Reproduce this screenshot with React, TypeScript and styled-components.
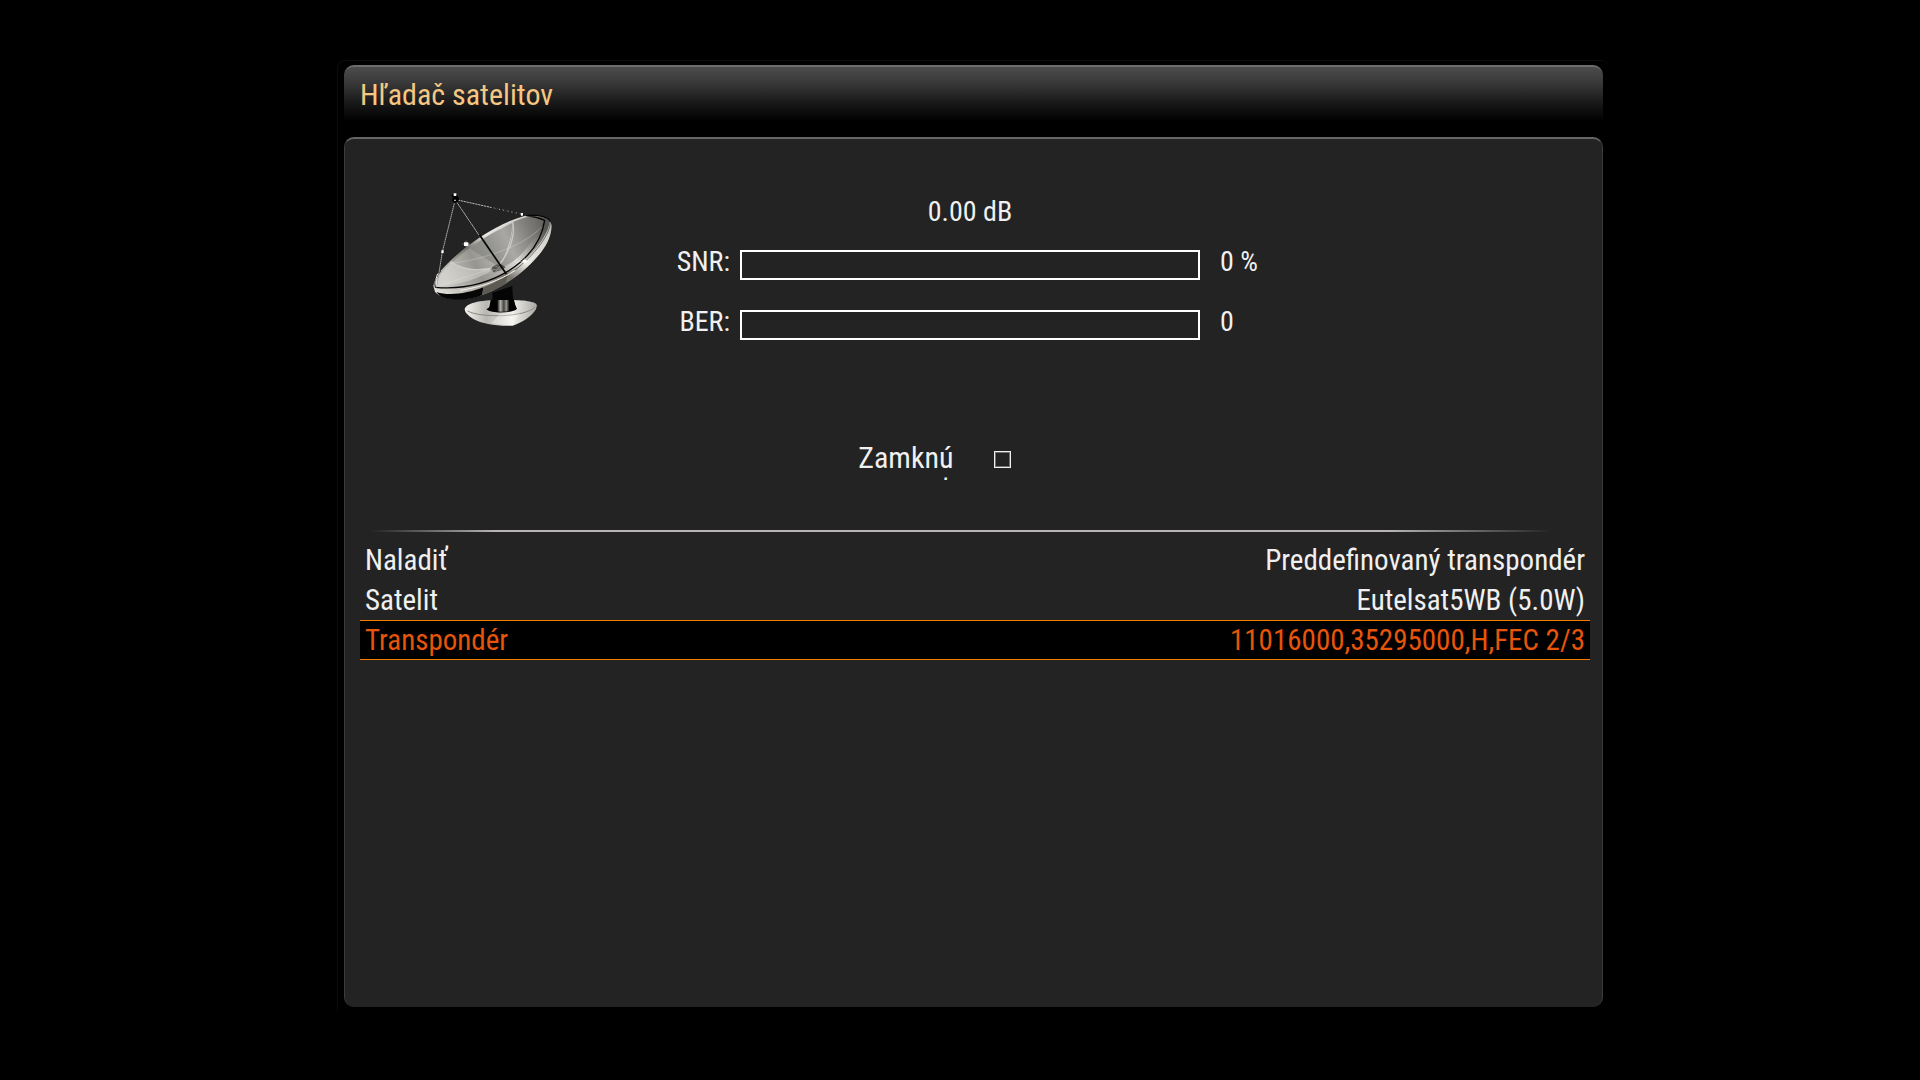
import React from "react";
import styled, { createGlobalStyle } from "styled-components";

const GlobalStyle = createGlobalStyle`
  *, *::before, *::after { box-sizing: border-box; }
  html, body { margin: 0; background: #000; }
  body, button, input {
    font-family: "Roboto Condensed", Roboto, "Liberation Sans Narrow", sans-serif;
    color: #f0f0f0;
  }
`;

const Page = styled.main`
  display: flex;
  min-height: 100vh;
  padding: 60px 311px 69px 337px;
`;

const Frame = styled.section`
  display: flex;
  flex: 1;
  flex-direction: column;
  gap: 16px;
  min-width: 0;
  padding: 4px 6px;
  border: solid #0c0c0c;
  border-width: 1px 0 0 1px;
  border-radius: 8px 8px 0 0;
`;

const TitleBar = styled.header`
  padding: 1px 16px 0;
  border: solid transparent;
  border-width: 2px 0 0;
  border-top-color: #6c6c6c;
  border-radius: 10px 10px 0 0;
  background: linear-gradient(#4c4c4c, #383838 30%, #1a1a1a 65%, #000);
`;

const Title = styled.h1`
  margin: 0;
  font-size: 30px;
  font-weight: 400;
  line-height: 53px;
  color: #f5c783;
`;

const Panel = styled.div`
  display: flex;
  flex: 1;
  flex-direction: column;
  border: solid #3c3c3c;
  border-width: 2px 1px 0 1px;
  border-top-color: #666;
  border-radius: 10px;
  background: #232323;
`;

const Signal = styled.section`
  display: flex;
  padding: 41px 0 0 75px;
`;

const Dish = styled.svg`
  flex: none;
  width: 150px;
  height: 160px;
`;

const Meters = styled.div`
  display: grid;
  flex: 1;
  grid-template-columns: 160px 1fr 392px;
  grid-template-rows: 50px 60px 60px;
  column-gap: 10px;
  align-items: start;
  padding-top: 20px;
  font-size: 28px;
  line-height: 24px;
`;

const Level = styled.output`
  grid-column: 1 / -1;
  display: grid;
  grid-template-columns: subgrid;
  text-align: center;
  & > span { grid-column: 2; }
`;

const MeterLabel = styled.label`
  text-align: right;
`;

const MeterValue = styled.output`
  padding-left: 10px;
`;

const Bar = styled.progress`
  appearance: none;
  width: 100%;
  height: 30px;
  border: 2px solid #fff;
  background: transparent;
  &::-webkit-progress-bar { background: transparent; }
  &::-webkit-progress-value { background: #fff; }
`;

const Lock = styled.div`
  display: grid;
  grid-template-columns: 1fr 1fr;
  column-gap: 40px;
  align-items: start;
  margin-top: 71px;
`;

const LockLabel = styled.label`
  height: 39px;
  overflow: hidden;
  font-size: 30px;
  line-height: 34px;
  text-align: right;
`;

const LockBox = styled.input`
  appearance: none;
  width: 17px;
  height: 17px;
  margin: 10px 0 0;
  border: 1px solid #f0f0f0;
  box-shadow: inset 0 0 0 1px #707070;
  background: transparent;
  &:checked { background: #f0f0f0; }
`;

const Divider = styled.hr`
  width: 100%;
  height: 2px;
  margin: 50px 0 0;
  border: 0;
  background: linear-gradient(90deg, transparent 2%, #b8b4b8 12%, #b8b4b8 83%, transparent 96%);
`;

const Settings = styled.ul`
  margin: 8px 12px 0 15px;
  padding: 0;
  list-style: none;
`;

const Setting = styled.button<{ $active?: boolean }>`
  display: flex;
  justify-content: space-between;
  width: 100%;
  padding: 0 5px;
  border: solid ${(p) => (p.$active ? "#f57c00" : "transparent")};
  border-width: 1px 0;
  background: ${(p) => (p.$active ? "#000" : "transparent")};
  color: ${(p) => (p.$active ? "#e6550a" : "#f0f0f0")};
  font-size: 29px;
  line-height: 38px;
`;

const rows = [
  { name: "Naladiť", value: "Preddefinovaný transpondér" },
  { name: "Satelit", value: "Eutelsat5WB (5.0W)" },
  { name: "Transpondér", value: "11016000,35295000,H,FEC 2/3", active: true },
];

function SatelliteDish() {
  return (
    <Dish viewBox="0 0 450 480" aria-hidden="true">
      <defs>
        <linearGradient id="bowl" x1="0" y1="0.6" x2="1" y2="0.3">
          <stop offset="0" stopColor="#c9c7c2" />
          <stop offset="0.3" stopColor="#969590" />
          <stop offset="0.5" stopColor="#b5b4b0" />
          <stop offset="0.65" stopColor="#deddda" />
          <stop offset="0.85" stopColor="#8b8a87" />
          <stop offset="1" stopColor="#565654" />
        </linearGradient>
        <linearGradient id="shell" x1="0" y1="1" x2="1" y2="0">
          <stop offset="0" stopColor="#f2f1ed" />
          <stop offset="0.1" stopColor="#d8d6d0" />
          <stop offset="0.45" stopColor="#77746c" />
          <stop offset="0.6" stopColor="#e9e8e3" />
          <stop offset="0.85" stopColor="#d2d1cc" />
          <stop offset="1" stopColor="#a4a3a0" />
        </linearGradient>
        <linearGradient id="base">
          <stop offset="0" stopColor="#f4f3ee" />
          <stop offset="0.3" stopColor="#b9b7b1" />
          <stop offset="0.5" stopColor="#d8d6d1" />
          <stop offset="0.65" stopColor="#f2f1ed" />
          <stop offset="1" stopColor="#aaa8a2" />
        </linearGradient>
        <linearGradient id="stem">
          <stop offset="0.3" stopColor="#000" />
          <stop offset="0.42" stopColor="#b5b3ae" />
          <stop offset="0.55" stopColor="#44423e" />
          <stop offset="0.64" stopColor="#9b9994" />
          <stop offset="0.76" stopColor="#000" />
        </linearGradient>
      </defs>
      <path d="M134 388C138 370 175 360 245 360C300 359 348 362 351 376L348 388C335 408 310 427 278 437C230 439 187 432 160 417C146 408 135 399 134 388Z" fill="url(#base)" />
      <path d="M143 393C180 414 315 413 345 381" fill="none" stroke="#8c8982" strokeWidth="3" />
      <path d="M238 403L214 430L278 436L300 400Z" fill="#fff" opacity=".3" />
      <path d="M217 338L277 318C277 345 280 365 291 386C280 400 215 402 199 388C217 379 219 362 217 338Z" fill="#050505" />
      <path d="M212 360H282L288 387C270 397 225 398 207 388Z" fill="url(#stem)" />
      <path d="M40 318C43 302 50 286 62 272C124 204 223 133 315 107C350 102 392 108 395 137C393 184 366 220 320 263C271 307 215 340 158 353C116 363 57 354 45 335Z" fill="url(#shell)" />
      <path d="M50 336C86 349 145 340 190 322L187 345C141 366 62 363 50 336Z" fill="#060606" />
      <path d="M190 322C220 312 248 293 264 280L258 308C241 323 212 335 187 345Z" fill="#5d5a54" />
      <path d="M49 325C50 290 88 252 137 213C196 169 262 127 318 112C350 106 383 111 388 124C390 154 345 222 292 258C234 303 137 334 49 325Z" fill="url(#bowl)" />
      <path d="M280 126C276 181 260 231 234 260C257 270 326 220 372 121C342 110 311 113 280 126Z" fill="#777672" opacity=".5" />
      <path d="M148 205C180 182 236 147 277 130C274 184 256 231 234 259Z" fill="#7c7b78" opacity=".55" />
      <path d="M92 245C123 270 178 274 231 262C180 300 94 318 51 320C54 294 70 265 92 245Z" fill="#dddbd6" opacity=".5" />
      <path d="M278 127C288 169 264 223 234 260M92 244C126 272 181 275 235 260" fill="none" stroke="#d8d7d2" strokeWidth="4" opacity=".75" />
      <path d="M88 250C152 247 307 206 367 139M230 264C175 275 117 301 58 316" fill="none" stroke="#e8e6e1" strokeWidth="2" opacity=".45" />
      <path d="M46 322C127 329 205 310 267 272C338 226 366 175 374 121C356 113 337 109 319 107C354 103 386 110 390 125" fill="none" stroke="#070707" strokeWidth="4" />
      <path d="M62 274C49 290 42 305 46 322" fill="none" stroke="#070707" strokeWidth="3" />
      <path d="M390 125C393 160 345 225 282 272" fill="none" stroke="#3a3a38" strokeWidth="2" />
      <path d="M53 281C45 302 47 315 52 321M120 331C184 322 238 302 286 271" fill="none" stroke="#f6f5f0" strokeWidth="3" />
      <path d="M214 264L227 254L244 252L257 262L242 271L220 277Z" fill="#55534e" />
      <path d="M210 269H249M224 279L246 250M222 256L253 272" stroke="#888680" strokeWidth="3" />
      <path d="M106 60L181 171" stroke="#aaa9a5" strokeWidth="3" />
      <path d="M114 68L207 205" stroke="#252525" strokeWidth="3" strokeDasharray="6 3" />
      <path d="M178 164L259 282" stroke="#060606" strokeWidth="5" />
      <path d="M104 66L67 216L50 322" fill="none" stroke="#aaa9a6" strokeWidth="3" strokeDasharray="5 1" />
      <path d="M113 60L306 103" fill="none" stroke="#b8b7b4" strokeWidth="3" strokeDasharray="7 2" />
      <path d="M215 83L322 107" stroke="#050505" strokeWidth="3" strokeDasharray="9 4" />
      <path d="M94 46L101 42L111 45L118 57L113 67L103 69L95 61L99 54Z" fill="#000" />
      <path d="M101 40H109V48H101ZM103 59H107V63H103Z" fill="#fff" />
      <path d="M132 187H145V198H132ZM64 211H71V219H64ZM303 99H309V107H303ZM308 239H320V248H308Z" fill="#fff" />
      <path d="M127 192H150M138 182V202M296 245H330M314 233V253" stroke="#fff" strokeWidth="2" opacity=".6" />
    </Dish>
  );
}

export default function App() {
  return (
    <>
      <GlobalStyle />
      <Page>
        <Frame>
          <TitleBar>
            <Title>Hľadač satelitov</Title>
          </TitleBar>
          <Panel>
            <Signal>
              <SatelliteDish />
              <Meters>
                <Level>
                  <span>0.00 dB</span>
                </Level>
                <MeterLabel htmlFor="snr">SNR:</MeterLabel>
                <Bar id="snr" value={0} max={100} />
                <MeterValue htmlFor="snr">0 %</MeterValue>
                <MeterLabel htmlFor="ber">BER:</MeterLabel>
                <Bar id="ber" value={0} max={100} />
                <MeterValue htmlFor="ber">0</MeterValue>
              </Meters>
            </Signal>
            <Lock>
              <LockLabel htmlFor="lock">
                Zamknú
                <br />
                ť:
              </LockLabel>
              <LockBox id="lock" type="checkbox" />
            </Lock>
            <Divider />
            <Settings>
              {rows.map((row) => (
                <li key={row.name}>
                  <Setting type="button" $active={row.active}>
                    <span>{row.name}</span>
                    <span>{row.value}</span>
                  </Setting>
                </li>
              ))}
            </Settings>
          </Panel>
        </Frame>
      </Page>
    </>
  );
}
